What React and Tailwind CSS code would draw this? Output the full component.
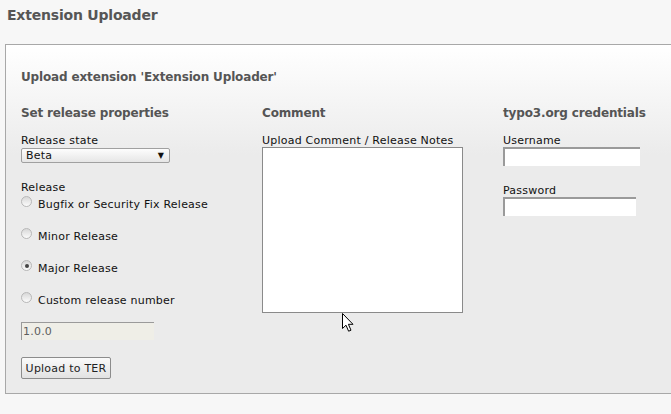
import React from "react";

const font = "font-['DejaVu_Sans',Verdana,sans-serif]";
const body = "text-[11px] leading-[13px] tracking-[0.22px] text-[#111]";
const heading = "text-[12px] leading-[15px] font-bold tracking-[-0.15px] text-[#555]";

const Radio = ({ checked, label, className = "" }) => (
    <div className={`flex items-center h-[13px] ${className}`}>
        <span className="relative -top-[3px] w-[11px] h-[11px] rounded-full border border-[#b8b8b8] bg-[linear-gradient(#d8d8d8,#fbfbfb)] flex items-center justify-center shrink-0">
            {checked && <span className="w-[4px] h-[4px] rounded-full bg-[#444]" />}
        </span>
        <span className={`ml-[6px] ${body}`}>{label}</span>
    </div>
);

const Cursor = () => (
    <svg
        className="absolute left-[341px] top-[313px]"
        width="14"
        height="20"
        viewBox="0 0 14 20"
    >
        <path
            d="M1.5 0.5 L1.5 15.5 L5 12.2 L7.6 18.2 L10 17.2 L7.4 11.3 L12 11.3 Z"
            fill="#fff"
            stroke="#000"
            strokeWidth="1"
        />
    </svg>
);

export default function App() {
    return (
        <div className={`relative h-[414px] w-[671px] overflow-hidden bg-[#f7f7f7] ${font}`}>
            <h1 className="pt-[7px] pl-[7px] text-[14px] leading-[17px] font-bold tracking-[-0.2px] text-[#565656]">
                Extension Uploader
            </h1>

            <div className="mt-[20px] ml-[5px] w-[720px] border border-[#a8a8a8] bg-[linear-gradient(#ffffff_0px,#ebebeb_110px)] pt-[25px] pl-[15px] pb-[14px]">
                <h2 className={heading}>Upload extension 'Extension Uploader'</h2>

                <div className="mt-[21px] grid grid-cols-[241px_241px_241px]">
                    <div>
                        <h3 className={heading}>Set release properties</h3>
                        <div className={`mt-[13px] ${body}`}>Release state</div>
                        <div className="mt-[1px] h-[15px] w-[149px] rounded-[2px] border border-[#a0a0a0] bg-[linear-gradient(#fdfdfd,#e6e6e6)] flex items-center justify-between pl-[4px] pr-[5px]">
                            <span className={body}>Beta</span>
                            <span className="text-[8px] leading-[8px] text-[#111]">▼</span>
                        </div>
                        <div className={`mt-[18px] ${body}`}>Release</div>
                        <Radio className="mt-[4px]" label="Bugfix or Security Fix Release" />
                        <Radio className="mt-[19px]" label="Minor Release" />
                        <Radio className="mt-[19px]" checked label="Major Release" />
                        <Radio className="mt-[19px]" label="Custom release number" />
                        <div className="mt-[15px] h-[18px] w-[133px] border-t border-l border-[#9a9a9a] bg-[#efeee7] flex items-center pl-[1px] text-[11px] leading-[13px] tracking-[0.22px] text-[#5e5e5e]">
                            1.0.0
                        </div>
                        <button className="mt-[17px] h-[22px] w-[90px] rounded-[2px] border border-[#8c8c8c] bg-[linear-gradient(#fafafa,#e2e2e2)] text-[11px] leading-[13px] tracking-[0.22px] text-[#222] flex items-center justify-center">
                            Upload to TER
                        </button>
                    </div>

                    <div>
                        <h3 className={heading}>Comment</h3>
                        <div className={`mt-[13px] ${body}`}>Upload Comment / Release Notes</div>
                        <div className="h-[166px] w-[201px] border border-[#8a8a8a] bg-white" />
                    </div>

                    <div>
                        <h3 className={heading}>typo3.org credentials</h3>
                        <div className={`mt-[13px] ${body}`}>Username</div>
                        <div className="h-[19px] w-[137px] border-t-2 border-l-2 border-[#9a9a9a] bg-white" />
                        <div className={`mt-[18px] ${body}`}>Password</div>
                        <div className="h-[19px] w-[133px] border-t-2 border-l-2 border-[#9a9a9a] bg-white" />
                    </div>
                </div>
            </div>

            <Cursor />
        </div>
    );
}
